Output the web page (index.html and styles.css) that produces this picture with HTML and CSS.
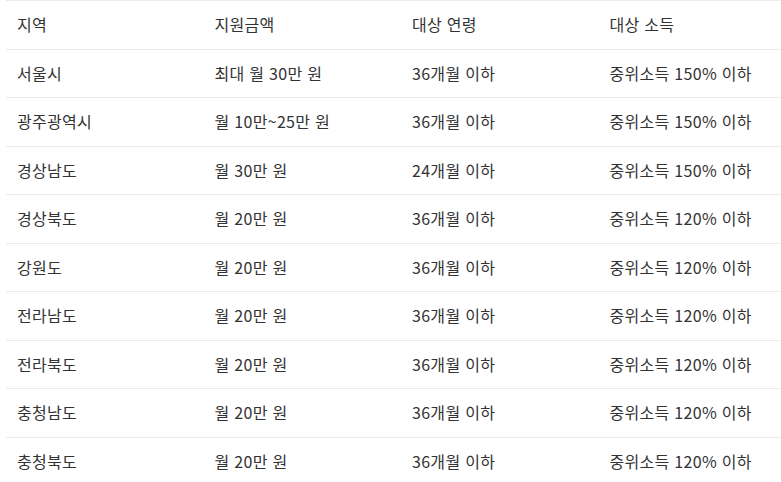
FILE: index.html
```html
<!DOCTYPE html>
<html lang="ko">
<head>
<meta charset="utf-8">
<link rel="stylesheet" href="styles.css">
</head>
<body>
<table class="support-table">
  <thead>
    <tr><th>지역</th><th>지원금액</th><th>대상 연령</th><th>대상 소득</th></tr>
  </thead>
  <tbody>
    <tr><td>서울시</td><td>최대 월 30만 원</td><td>36개월 이하</td><td>중위소득 150% 이하</td></tr>
    <tr><td>광주광역시</td><td>월 10만~25만 원</td><td>36개월 이하</td><td>중위소득 150% 이하</td></tr>
    <tr><td>경상남도</td><td>월 30만 원</td><td>24개월 이하</td><td>중위소득 150% 이하</td></tr>
    <tr><td>경상북도</td><td>월 20만 원</td><td>36개월 이하</td><td>중위소득 120% 이하</td></tr>
    <tr><td>강원도</td><td>월 20만 원</td><td>36개월 이하</td><td>중위소득 120% 이하</td></tr>
    <tr><td>전라남도</td><td>월 20만 원</td><td>36개월 이하</td><td>중위소득 120% 이하</td></tr>
    <tr><td>전라북도</td><td>월 20만 원</td><td>36개월 이하</td><td>중위소득 120% 이하</td></tr>
    <tr><td>충청남도</td><td>월 20만 원</td><td>36개월 이하</td><td>중위소득 120% 이하</td></tr>
    <tr><td>충청북도</td><td>월 20만 원</td><td>36개월 이하</td><td>중위소득 120% 이하</td></tr>
  </tbody>
</table>
</body>
</html>
```

FILE: styles.css
```css
html, body {
  margin: 0;
  background: #fff;
  overflow: hidden;
}
body {
  padding: 0 0 0 6px;
  font-family: "Noto Sans CJK KR", "Noto Sans", sans-serif;
  font-size: 16px;
  letter-spacing: 0.3px;
  color: #333;
}
.support-table {
  width: 790px;
  border-collapse: collapse;
  table-layout: fixed;
  border-top: 1px solid #ebebeb;
}
.support-table th,
.support-table td {
  text-align: left;
  font-weight: normal;
  padding: 12px 11px;
  line-height: 23.5px;
  border-bottom: 1px solid #ebebeb;
  white-space: nowrap;
}
```
